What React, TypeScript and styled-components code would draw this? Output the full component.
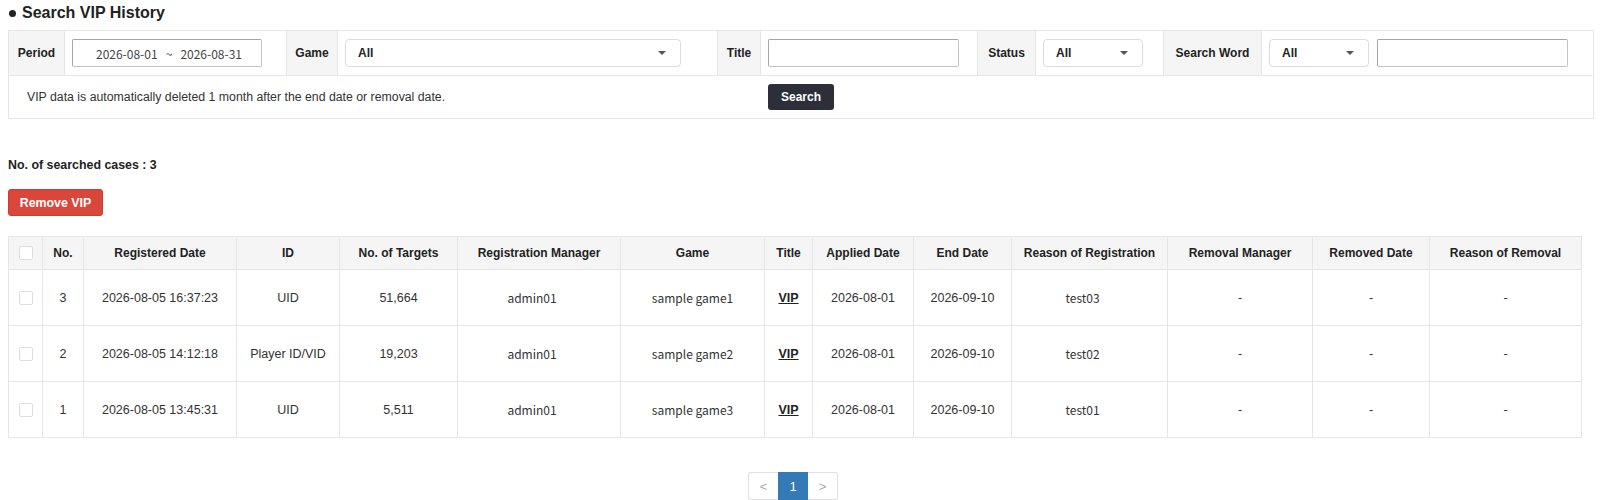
import React from "react";
import styled, { createGlobalStyle } from "styled-components";

const Global = createGlobalStyle`
  html, body { margin: 0; padding: 0; background: #fff; }
  body { font-family: "Liberation Sans", Arial, sans-serif; color: #333; font-size: 12px; }
  * { box-sizing: border-box; }
`;

const Page = styled.div`
  padding: 4px 6px 0 8px;
  display: flex;
  flex-direction: column;
`;

const Heading = styled.h2`
  margin: 0;
  font-size: 16px;
  line-height: 18px;
  font-weight: bold;
  color: #222;
  display: flex;
  align-items: center;
  gap: 6px;
  &::before {
    content: "";
    width: 7px;
    height: 7px;
    border-radius: 50%;
    background: #222;
    margin-left: 1px;
  }
`;

const FilterBox = styled.div`
  margin-top: 8px;
  border: 1px solid #e6e6e6;
  display: flex;
  flex-direction: column;
`;

const FilterRow = styled.div`
  display: flex;
  height: 44px;
  & + & { border-top: 1px solid #e6e6e6; height: 43px; }
`;

const Label = styled.div<{ $w: number }>`
  width: ${(p) => p.$w}px;
  flex: none;
  background: #f5f5f5;
  display: flex;
  align-items: center;
  justify-content: center;
  font-weight: bold;
  font-size: 12px;
  color: #222;
  border-left: 1px solid #e6e6e6;
  border-right: 1px solid #e6e6e6;
  &:first-child { border-left: none; }
`;

const Field = styled.div<{ $w?: number }>`
  ${(p) => (p.$w ? `width: ${p.$w}px; flex: none;` : "flex: 1;")}
  display: flex;
  align-items: center;
  gap: 8px;
  padding-left: 7px;
`;

const TextInput = styled.div<{ $w: number }>`
  width: ${(p) => p.$w}px;
  height: 28px;
  border: 1px solid #a6a6a6;
  border-right-color: #c4c4c4;
  border-bottom-color: #c4c4c4;
  border-radius: 2px;
  background: #fff;
  display: flex;
  align-items: center;
  justify-content: center;
  padding-left: 4px;
  font-family: "Noto Sans CJK KR", "Noto Sans", sans-serif;
  font-size: 12px;
  color: #444;
  white-space: pre;
`;

const Select = styled.div<{ $w: number }>`
  width: ${(p) => p.$w}px;
  height: 28px;
  border: 1px solid #dcdcdc;
  border-radius: 4px;
  background: #fff;
  display: flex;
  align-items: center;
  justify-content: space-between;
  padding: 0 14px 0 12px;
  font-size: 12px;
  font-weight: bold;
  color: #222;
  &::after {
    content: "";
    border-left: 4px solid transparent;
    border-right: 4px solid transparent;
    border-top: 4px solid #555;
  }
`;

const Notice = styled.div`
  width: 752px;
  flex: none;
  display: flex;
  align-items: center;
  padding-left: 18px;
  font-size: 12.3px;
  color: #333;
`;

const ButtonCell = styled.div`
  display: flex;
  align-items: center;
  padding-left: 7px;
`;

const DarkButton = styled.button`
  height: 26px;
  width: 66px;
  background: #2c2f3a;
  color: #fff;
  border: none;
  border-radius: 3px;
  font-family: "Liberation Sans", Arial, sans-serif;
  font-weight: bold;
  font-size: 12px;
  padding: 0;
`;

const Count = styled.div`
  margin-top: 38px;
  font-weight: bold;
  font-size: 12.4px;
  line-height: 16px;
  color: #222;
`;

const RedButton = styled.button`
  margin-top: 16px;
  width: 95px;
  height: 27px;
  background: #d9473b;
  border: 1px solid #c93c31;
  border-radius: 3px;
  color: #fff;
  font-family: "Liberation Sans", Arial, sans-serif;
  font-weight: bold;
  font-size: 12.4px;
  padding: 0;
`;

const Table = styled.table`
  margin-top: 20px;
  width: 1573px;
  border-collapse: collapse;
  table-layout: fixed;
  font-size: 12px;
`;

const Th = styled.th`
  height: 33px;
  background: #f5f5f5;
  border: 1px solid #e6e6e6;
  font-weight: bold;
  color: #222;
  text-align: center;
  padding: 0;
`;

const Td = styled.td<{ $alt?: boolean; $shift?: boolean }>`
  height: 56px;
  border: 1px solid #e6e6e6;
  text-align: center;
  padding: 0 ${(p) => (p.$shift ? "14px" : "0")} 0 0;
  color: #333;
  font-size: ${(p) => (p.$alt ? "12px" : "12.5px")};
  font-family: ${(p) =>
    p.$alt
      ? `"Noto Sans CJK KR", "Noto Sans", sans-serif`
      : `"Liberation Sans", Arial, sans-serif`};
`;

const Check = styled.span`
  display: inline-block;
  width: 14px;
  height: 14px;
  border: 1px solid #ddd;
  border-radius: 2px;
  background: #fff;
  vertical-align: middle;
`;

const Link = styled.a`
  color: #222;
  text-decoration: underline;
  font-weight: bold;
`;

const Pager = styled.div`
  margin-top: 34px;
  margin-left: 740px;
  display: flex;
`;

const PageCell = styled.div<{ $active?: boolean }>`
  width: 30px;
  height: 28px;
  display: flex;
  align-items: center;
  justify-content: center;
  font-size: 13px;
  border: 1px solid ${(p) => (p.$active ? "#337ab7" : "#e0e0e0")};
  background: ${(p) => (p.$active ? "#337ab7" : "#fff")};
  color: ${(p) => (p.$active ? "#fff" : "#aaa")};
  &:first-child { border-radius: 3px 0 0 3px; border-right: none; }
  &:last-child { border-radius: 0 3px 3px 0; border-left: none; }
`;

const cols = [34, 41, 153, 103, 118, 163, 144, 48, 101, 98, 156, 145, 117, 152];
const headers = [
  "No.",
  "Registered Date",
  "ID",
  "No. of Targets",
  "Registration Manager",
  "Game",
  "Title",
  "Applied Date",
  "End Date",
  "Reason of Registration",
  "Removal Manager",
  "Removed Date",
  "Reason of Removal",
];

const rows = [
  { no: 3, date: "2026-08-05 16:37:23", id: "UID", targets: "51,664", game: "sample game1", reason: "test03" },
  { no: 2, date: "2026-08-05 14:12:18", id: "Player ID/VID", targets: "19,203", game: "sample game2", reason: "test02" },
  { no: 1, date: "2026-08-05 13:45:31", id: "UID", targets: "5,511", game: "sample game3", reason: "test01" },
];

export default function App() {
  return (
    <>
      <Global />
      <Page>
        <Heading>Search VIP History</Heading>
        <FilterBox>
          <FilterRow>
            <Label $w={56}>Period</Label>
            <Field $w={221}>
              <TextInput $w={190}>{"2026-08-01   ~   2026-08-31"}</TextInput>
            </Field>
            <Label $w={52}>Game</Label>
            <Field $w={379}>
              <Select $w={336}>All</Select>
            </Field>
            <Label $w={44}>Title</Label>
            <Field $w={216}>
              <TextInput $w={191} />
            </Field>
            <Label $w={59}>Status</Label>
            <Field $w={127}>
              <Select $w={100}>All</Select>
            </Field>
            <Label $w={99}>Search Word</Label>
            <Field>
              <Select $w={100}>All</Select>
              <TextInput $w={191} />
            </Field>
          </FilterRow>
          <FilterRow>
            <Notice>VIP data is automatically deleted 1 month after the end date or removal date.</Notice>
            <ButtonCell>
              <DarkButton>Search</DarkButton>
            </ButtonCell>
          </FilterRow>
        </FilterBox>
        <Count>No. of searched cases : 3</Count>
        <div>
          <RedButton>Remove VIP</RedButton>
        </div>
        <Table>
          <colgroup>
            {cols.map((w, i) => (
              <col key={i} style={{ width: w }} />
            ))}
          </colgroup>
          <thead>
            <tr>
              <Th>
                <Check />
              </Th>
              {headers.map((h) => (
                <Th key={h}>{h}</Th>
              ))}
            </tr>
          </thead>
          <tbody>
            {rows.map((r) => (
              <tr key={r.no}>
                <Td>
                  <Check />
                </Td>
                <Td>{r.no}</Td>
                <Td>{r.date}</Td>
                <Td>{r.id}</Td>
                <Td>{r.targets}</Td>
                <Td $alt $shift>admin01</Td>
                <Td $alt>{r.game}</Td>
                <Td>
                  <Link>VIP</Link>
                </Td>
                <Td>2026-08-01</Td>
                <Td>2026-09-10</Td>
                <Td $alt $shift>{r.reason}</Td>
                <Td>-</Td>
                <Td>-</Td>
                <Td>-</Td>
              </tr>
            ))}
          </tbody>
        </Table>
        <Pager>
          <PageCell>&lt;</PageCell>
          <PageCell $active>1</PageCell>
          <PageCell>&gt;</PageCell>
        </Pager>
      </Page>
    </>
  );
}
